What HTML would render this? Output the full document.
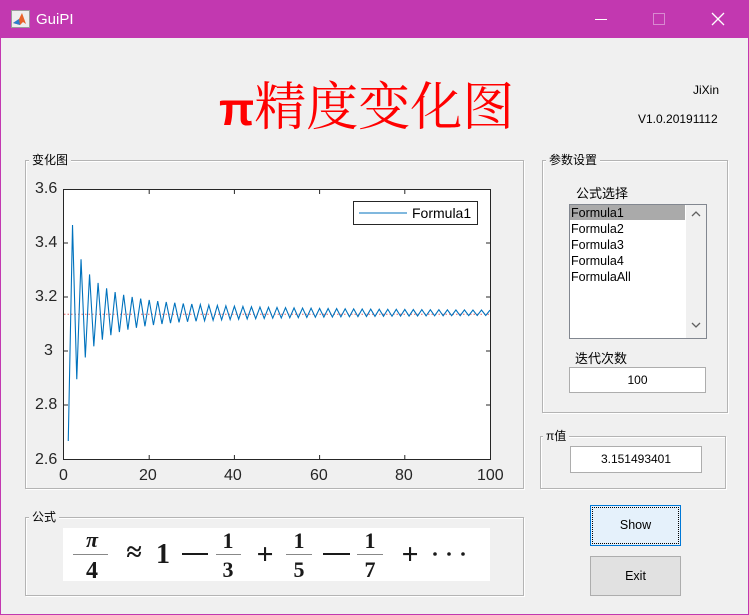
<!DOCTYPE html>
<html><head><meta charset="utf-8"><style>
*{margin:0;padding:0;box-sizing:border-box}
body{width:749px;height:615px;background:#f0f0f0;position:relative;overflow:hidden;font-family:"Liberation Sans","Noto Sans CJK SC",sans-serif;font-size:12px;color:#000}
.a{position:absolute}
.tb{left:0;top:0;width:749px;height:38px;background:#c238b0;color:#fff}
.gb{position:absolute;border:1px solid #b4b4b4;box-shadow:inset 1px 1px 0 #fff,1px 1px 0 #fff}
.gl{position:absolute;background:#f0f0f0;padding:0 3px;font-size:12px;line-height:14px}
.box{position:absolute;background:#fff;border:1px solid #adadad;text-align:center}
.tick{position:absolute;font-size:16px;color:#262626}
</style></head><body>
<div class="a tb">
 <svg class="a" style="left:11px;top:10px" width="19" height="18" viewBox="0 0 19 18"><rect x="0.5" y="0.5" width="18" height="17" fill="#eee" stroke="#999"/><path d="M2 13 L8 9 L11 3 L15 14 L12 12 L9 15 Z" fill="#e8622a"/><path d="M2 13 L8 9 L9 15 Z" fill="#2a7fd0"/></svg>
 <div class="a" style="left:36px;top:11px;font-size:15px;color:#fff">GuiPI</div>
 <div class="a" style="left:595px;top:19px;width:12px;height:1px;background:#fff"></div>
 <div class="a" style="left:653px;top:13px;width:12px;height:12px;border:1px solid #d88ad0"></div>
 <svg class="a" style="left:711px;top:12px" width="14" height="14"><path d="M1 1 L13 13 M13 1 L1 13" stroke="#fff" stroke-width="1.3"/></svg>
</div>
<div class="a" style="left:0;top:38px;width:1px;height:577px;background:#c238b0"></div>
<div class="a" style="left:748px;top:38px;width:1px;height:577px;background:#c238b0"></div>
<div class="a" style="left:0;top:614px;width:749px;height:1px;background:#c238b0"></div>

<div class="a" style="left:219px;top:71px;font-size:52px;line-height:64px;color:#f00;white-space:nowrap"><span style="font-family:'Liberation Sans',sans-serif;font-weight:bold;font-size:46px">π</span><span style="font-family:'Noto Serif CJK SC','WenQuanYi Zen Hei',serif">精度变化图</span></div>
<div class="a" style="left:693px;top:83px">JiXin</div>
<div class="a" style="left:638px;top:112px">V1.0.20191112</div>

<div class="gb" style="left:25px;top:160px;width:499px;height:329px"></div>
<div class="gl" style="left:29px;top:153px">变化图</div>
<div class="gb" style="left:542px;top:160px;width:186px;height:253px"></div>
<div class="gl" style="left:546px;top:153px">参数设置</div>
<div class="gb" style="left:540px;top:436px;width:186px;height:53px"></div>
<div class="gl" style="left:543px;top:429px">π值</div>
<div class="gb" style="left:25px;top:517px;width:499px;height:79px"></div>
<div class="gl" style="left:29px;top:510px">公式</div>

<div class="a" style="left:576px;top:183px;font-size:13px">公式选择</div>
<div class="a" style="left:569px;top:204px;width:138px;height:135px;background:#fff;border:1px solid #828790"></div>
<div class="a" style="left:570px;top:205px;width:115px;height:15px;background:#aaa"></div>
<div class="a" style="left:571px;top:205px;line-height:16px;font-size:12.5px">Formula1<br>Formula2<br>Formula3<br>Formula4<br>FormulaAll</div>
<div class="a" style="left:686px;top:205px;width:20px;height:133px;background:#f0f0f0"></div>
<svg class="a" style="left:690px;top:209px" width="12" height="125"><path d="M2 7 L6 3 L10 7" fill="none" stroke="#606060" stroke-width="1.3"/><path d="M2 114 L6 118 L10 114" fill="none" stroke="#606060" stroke-width="1.3"/></svg>
<div class="a" style="left:575px;top:348px;font-size:13px">迭代次数</div>
<div class="box" style="left:569px;top:367px;width:137px;height:26px;line-height:24px">100</div>
<div class="box" style="left:570px;top:446px;width:132px;height:27px;line-height:25px">3.151493401</div>
<div class="a" style="left:590px;top:505px;width:91px;height:41px;background:#e5f1fb;border:1px solid #0078d7;text-align:center;line-height:39px;font-size:12.5px"><div class="a" style="left:1px;top:1px;right:1px;bottom:1px;border:1px dotted #000"></div>Show</div>
<div class="a" style="left:590px;top:556px;width:91px;height:40px;background:#e1e1e1;border:1px solid #adadad;text-align:center;line-height:38px;font-size:12.5px">Exit</div>

<div class="a" style="left:63px;top:189px;width:428px;height:271px;background:#fff;border:1px solid #262626"></div>
<svg class="a" style="left:0;top:0" width="749" height="615">
 <defs><clipPath id="c"><rect x="64" y="190" width="426" height="269"/></clipPath></defs>
 <g stroke="#262626" stroke-width="1" id="ticks"></g>
 <line x1="64" y1="314.2" x2="490" y2="314.2" stroke="#e06060" stroke-width="1" stroke-dasharray="1.5 2" clip-path="url(#c)"/>
 <polyline id="pl" fill="none" stroke="#0072bd" stroke-width="1.1" clip-path="url(#c)" points=""/>
 <rect x="353.5" y="201.5" width="124" height="23" fill="#fff" stroke="#262626"/>
 <line x1="359" y1="213" x2="407" y2="213" stroke="#0072bd" stroke-width="1.1"/>
 <text x="412" y="218" font-family="Liberation Sans" font-size="14" fill="#000">Formula1</text>
</svg>
<div class="tick" style="left:35px;top:180px">3.6</div>
<div class="tick" style="left:35px;top:234px">3.4</div>
<div class="tick" style="left:35px;top:288px">3.2</div>
<div class="tick" style="left:44px;top:342px">3</div>
<div class="tick" style="left:35px;top:396px">2.8</div>
<div class="tick" style="left:35px;top:451px">2.6</div>
<div class="tick" style="left:59px;top:467px">0</div>
<div class="tick" style="left:139px;top:467px">20</div>
<div class="tick" style="left:224px;top:467px">40</div>
<div class="tick" style="left:310px;top:467px">60</div>
<div class="tick" style="left:395px;top:467px">80</div>
<div class="tick" style="left:477px;top:467px">100</div>

<div class="a" style="left:63px;top:528px;width:427px;height:53px;background:#fff"></div>
<svg class="a" style="left:63px;top:528px" width="427" height="53" font-family="Liberation Serif,serif" font-weight="bold" fill="#1a1a1a">
 <text x="29" y="19" font-size="22" text-anchor="middle" font-style="italic">π</text>
 <rect x="10" y="26" width="35" height="1" fill="#888"/>
 <text x="29" y="50" font-size="24" text-anchor="middle">4</text>
 <text x="71" y="33" font-size="28" text-anchor="middle">≈</text>
 <text x="100" y="35" font-size="28" text-anchor="middle">1</text>
 <rect x="119" y="25" width="26" height="2"/>
 <text x="165" y="20" font-size="22" text-anchor="middle">1</text>
 <rect x="153" y="26" width="25" height="1" fill="#888"/>
 <text x="165" y="49" font-size="22" text-anchor="middle">3</text>
 <text x="202" y="36" font-size="30" text-anchor="middle">+</text>
 <text x="236" y="20" font-size="22" text-anchor="middle">1</text>
 <rect x="223" y="26" width="26" height="1" fill="#888"/>
 <text x="236" y="49" font-size="22" text-anchor="middle">5</text>
 <rect x="260" y="25" width="27" height="2"/>
 <text x="307" y="20" font-size="22" text-anchor="middle">1</text>
 <rect x="294" y="26" width="26" height="1" fill="#888"/>
 <text x="307" y="49" font-size="22" text-anchor="middle">7</text>
 <text x="347" y="36" font-size="30" text-anchor="middle">+</text>
 <circle cx="372" cy="26" r="1.8"/><circle cx="386" cy="26" r="1.8"/><circle cx="400" cy="26" r="1.8"/>
</svg>
<script>
var pts=[],s=4;
for(var k=1;k<=100;k++){s+=4*(k%2?-1:1)/(2*k+1);pts.push((64+k*4.26).toFixed(2)+','+(189+(3.6-s)*270).toFixed(2));}
document.getElementById('pl').setAttribute('points',pts.join(' '));
var g=document.getElementById('ticks'),h='';
for(var i=1;i<5;i++){var x=64+i*85.2;h+='<line x1="'+x+'" y1="190" x2="'+x+'" y2="194"/><line x1="'+x+'" y1="459" x2="'+x+'" y2="455"/>';}
for(var j=1;j<5;j++){var y=189+j*54;h+='<line x1="64" y1="'+y+'" x2="68" y2="'+y+'"/><line x1="490" y1="'+y+'" x2="486" y2="'+y+'"/>';}
g.innerHTML=h;
</script>
</body></html>
